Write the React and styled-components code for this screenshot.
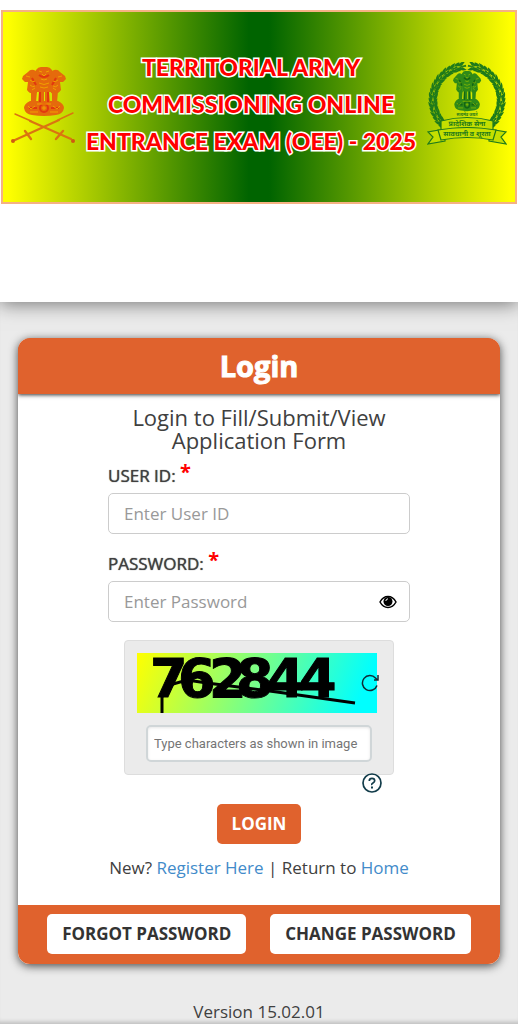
import { useState } from 'react';
import styled, { createGlobalStyle } from 'styled-components';

const GlobalStyle = createGlobalStyle`
  * {
    box-sizing: border-box;
  }
  body {
    margin: 0;
    background: #ebebeb;
    color: #404040;
    font-family: 'Open Sans', 'Liberation Sans', sans-serif;
    font-size: 17px;
    line-height: 24px;
  }
`;

const Header = styled.header`
  padding: 10px 0 98px;
  background: #fff;
  box-shadow: 0 2px 18px rgba(0, 0, 0, 0.5);
`;

const Banner = styled.div`
  display: grid;
  grid-template-columns: 64px 1fr 80px;
  align-items: center;
  margin: 0 1px;
  height: 194px;
  padding: 0 8px 6px;
  border: 2px solid #f5b183;
  background: linear-gradient(90deg, #ff0 1%, #006400 48%, #006400 52%, #ff0 99%);
`;

const BannerTitle = styled.h1`
  margin: 0;
  color: #f00;
  font-family: Lato, 'Liberation Sans', sans-serif;
  font-size: 23px;
  font-weight: 900;
  line-height: 37px;
  text-align: center;
  white-space: nowrap;
  -webkit-text-stroke: 3px #fff;
  paint-order: stroke fill;
`;

const Page = styled.main`
  padding: 36px 18px 0;
  box-shadow: inset 0 -5px 4px -3px rgba(0, 0, 0, 0.2);
`;

const CardShadow = styled.div`
  border-radius: 12px;
  box-shadow: 0 2px 10px rgba(0, 0, 0, 0.7);
`;

const Card = styled.section`
  overflow: hidden;
  border-radius: 12px;
  background: #fff;
`;

const CardTitle = styled.h2`
  margin: 0;
  padding: 12px 0;
  background: #e0622d;
  box-shadow: 0 1px 4px rgba(0, 0, 0, 0.8);
  color: #fff;
  font-size: 29px;
  font-weight: 700;
  line-height: 32px;
  text-align: center;
  -webkit-text-stroke: 1px #fff;
`;

const Form = styled.form`
  display: flex;
  flex-direction: column;
  align-items: center;
  padding: 12px 90px 25px;
`;

const Lead = styled.p`
  margin: 0 0 12px;
  font-size: 22px;
  line-height: 23px;
  text-align: center;
`;

const Field = styled.div`
  width: 100%;
  margin-bottom: 18px;
`;

const Label = styled.label`
  display: block;
  margin-bottom: 5px;
  text-shadow: 0 0 1px currentColor;
`;

const Required = styled.span`
  color: #f00;
  font-size: 20px;
  font-weight: 700;
  line-height: 0;
  text-shadow: none;
  vertical-align: 3px;
`;

const InputWrap = styled.div`
  display: flex;
  align-items: center;
  height: 41px;
  padding: 0 12px 0 15px;
  border: 1px solid #ccc;
  border-radius: 5px;
  background: #fff;
`;

const Input = styled.input`
  flex: 1;
  min-width: 0;
  padding: 0;
  border: 0;
  outline: 0;
  background: none;
  color: #404040;
  font: inherit;

  &::placeholder {
    color: #999;
  }
`;

const IconButton = styled.button`
  display: flex;
  padding: 0;
  border: 0;
  background: none;
  color: #000;
  cursor: pointer;
`;

const Captcha = styled.div`
  width: 270px;
  padding: 12px;
  border: 1px solid #ddd;
  border-radius: 4px;
  background: #ebebeb;
`;

const CaptchaImage = styled.div`
  display: flex;
  align-items: center;
  width: 242px;
  height: 60px;
`;

const CaptchaPicture = styled.svg`
  display: block;
  flex: none;
  width: 240px;
  height: 60px;
  overflow: visible;
`;

const RefreshButton = styled(IconButton)`
  flex: none;
  margin-left: -16px;
`;

const CaptchaInput = styled.input`
  display: block;
  width: 226px;
  height: 37px;
  margin: 12px 0 0 9px;
  padding: 0 6px;
  border: 2px solid #d0d6d8;
  border-radius: 5px;
  background: #fff;
  box-shadow: inset 0 1px 3px rgba(0, 0, 0, 0.1);
  font-family: Roboto, 'Liberation Sans', sans-serif;
  font-size: 13px;

  &::placeholder {
    color: #757575;
  }
`;

const HelpButton = styled(IconButton)`
  align-self: flex-end;
  margin: -2px 28px 11px 0;
`;

const Button = styled.button`
  height: 40px;
  padding: 0 15px;
  border: 0;
  border-radius: 5px;
  background: ${({ $primary }) => ($primary ? '#e0622d' : '#fff')};
  color: ${({ $primary }) => ($primary ? '#fff' : '#333')};
  font: inherit;
  font-weight: 700;
  white-space: nowrap;
  cursor: pointer;
`;

const Links = styled.p`
  margin: 12px 0 0;
  white-space: nowrap;
`;

const Link = styled.a`
  color: #428bca;
  text-decoration: none;
`;

const CardFooter = styled.footer`
  display: flex;
  justify-content: center;
  gap: 24px;
  padding: 9px 0 10px;
  background: #e0622d;
`;

const Version = styled.footer`
  margin-top: 36px;
  text-align: center;
`;

const Lions = ({ color, shade, light }) => (
  <g fill={color}>
    <path d="M14 3q2-3 5-3h6q3 0 5 3l1 5-2 5v12H15V13l-2-5z" />
    <path d="M14 4Q9 1 6 5L1 9l-1 3 3 3 3 0-1 8q3 5 10 3l1-14zM30 4q5-3 8 1l5 4 1 3-3 3-3 0 1 8q-3 5-10 3l-1-14z" />
    <path d="M9 24h6l-1 12H9zM17 24h5v12h-6zM23 24h4l1 12h-5zM30 24h6l-1 12h-5z" />
    <path d="M8 34h28q6 3 6 7-1 6-8 7-12 2-24 0-7-1-8-7 0-4 6-7z" />
    <g fill="none" stroke={shade} strokeWidth="2">
      <path d="M18 25v10M26 25v10M17 8q5 4 10 0M10 11l4 7M34 11l-4 7M7 41h8M29 41h8" />
      <circle cx="22" cy="41" r="4" />
    </g>
    <g fill="none" stroke={light} strokeWidth="1">
      <path d="M17 4l3 1m4 0l3-1m-7 3l2 2 2-2m-5 5q3 2 6 0m-8 4q5 3 10 0m-9 4q4 2 8 0M4 9l4 1m28 0l4-1M8 13q3 3 5 1m18 0q2 2 5-1M8 18q3 3 5 1m18 0q3 2 5-1M10 23l3-2m18 0l3 2M20 41h4m-2-2v4M6 39l3 3 4-3m18 0l4 3 3-3M8 45h8m12 0h8M15 37h14" />
    </g>
  </g>
);

const ArmyEmblem = () => (
  <svg viewBox="0 0 64 80" width="64" height="80" role="img" aria-label="Army emblem">
    <g transform="translate(11 3)">
      <Lions color="#e56a0c" shade="#e2380f" light="#f0a000" />
    </g>
    <g fill="none" stroke="#db7410" strokeLinecap="round">
      <path d="M4 50L20 57M62 49L47 56" strokeWidth="1.4" />
      <path d="M19 57L60 75M48 56L4 76" strokeWidth="2.2" />
      <path d="M14 67l6 8M52 67l-7 8" strokeWidth="2.4" />
    </g>
    <circle cx="2" cy="77" r="2" fill="#cf5a10" />
    <circle cx="62" cy="77" r="2" fill="#cf5a10" />
  </svg>
);

const leafAngles = [10, 25, 40, 55, 70, 85, 100, 115, 130];

const TerritorialEmblem = () => (
  <svg viewBox="0 0 80 84" width="80" height="84" role="img" aria-label="Territorial Army emblem">
    {[1, -1].map((side) => (
      <g key={side} transform={`translate(40 38) scale(${side} 1)`} fill="#1f7a1a">
        {leafAngles.map((angle) => (
          <g key={angle} transform={`rotate(${angle}) translate(0 -34)`}>
            <path d="M-5-4.500Q1-5 4-1L-1-.500zM-5-1L5 0-5 1zM-5 4.500Q1 5 4 1L-1 .500z" />
            <path d="M1-4.500Q6-4 7-1L2-1zM1 4.500Q6 4 7 1L2 1z" />
          </g>
        ))}
      </g>
    ))}
    <g transform="translate(26 9) scale(.64 .82)">
      <Lions color="#2f8a18" shade="#146414" light="#8dbb00" />
    </g>
    <g fill="#c4df00" stroke="#1f7a1a" strokeWidth="1.2">
      <path d="M12 68L1 70l5 5-5 7 17-3v-9zM68 68l11 2-5 5 5 7-17-3v-9z" />
      <path d="M14 59q26-7 52 0v10q-26-7-52 0z" />
      <path d="M11 68q29-5 58 0l-3 10q-26-5-52 0z" />
    </g>
    <g
      fill="#1f7a1a"
      fontFamily="'Noto Sans Devanagari', 'Noto Sans', sans-serif"
      fontWeight="700"
      textAnchor="middle"
    >
      <text x="40" y="54" fontSize="4">सत्यमेव जयते</text>
      <text x="40" y="64" fontSize="7">प्रादेशिक सेना</text>
      <text x="40" y="74" fontSize="7">सावधानी व शूरता</text>
    </g>
  </svg>
);

const digits = [
  { value: '7', x: 13 },
  { value: '6', x: 41 },
  { value: '2', x: 72 },
  { value: '8', x: 99 },
  { value: '4', x: 130 },
  { value: '4', x: 162 },
];

const CaptchaCode = () => (
  <CaptchaPicture viewBox="0 0 240 60" role="img" aria-label="Captcha">
    <defs>
      <linearGradient id="captcha" x1="0" x2="1" y1="0" y2="0.1">
        <stop offset="0" stopColor="#ff0" />
        <stop offset="0.5" stopColor="#80ff80" />
        <stop offset="1" stopColor="#0ff" />
      </linearGradient>
    </defs>
    <rect width="240" height="60" fill="url(#captcha)" />
    <g
      fontFamily="'DejaVu Sans', sans-serif"
      fontSize="54"
      fontWeight="700"
      stroke="#000"
      strokeWidth="1"
    >
      {digits.map(({ value, x }) => (
        <text key={x} x={x} y="44">
          {value}
        </text>
      ))}
    </g>
    <path d="M25 60V44L36 31 50 27 70 30 140 39 218 50" fill="none" stroke="#000" strokeWidth="3" />
  </CaptchaPicture>
);

const App = () => {
  const [visible, setVisible] = useState(false);

  return (
    <>
      <GlobalStyle />
      <Header>
        <Banner>
          <ArmyEmblem />
          <BannerTitle>
            TERRITORIAL ARMY
            <br />
            COMMISSIONING ONLINE
            <br />
            ENTRANCE EXAM (OEE) - 2025
          </BannerTitle>
          <TerritorialEmblem />
        </Banner>
      </Header>
      <Page>
        <CardShadow>
          <Card>
            <CardTitle>Login</CardTitle>
            <Form onSubmit={(e) => e.preventDefault()}>
              <Lead>Login to Fill/Submit/View Application Form</Lead>
              <Field>
                <Label htmlFor="user">
                  USER ID: <Required>*</Required>
                </Label>
                <InputWrap>
                  <Input id="user" placeholder="Enter User ID" />
                </InputWrap>
              </Field>
              <Field>
                <Label htmlFor="password">
                  PASSWORD: <Required>*</Required>
                </Label>
                <InputWrap>
                  <Input
                    id="password"
                    type={visible ? 'text' : 'password'}
                    placeholder="Enter Password"
                  />
                  <IconButton
                    type="button"
                    aria-label="Show password"
                    onClick={() => setVisible(!visible)}
                  >
                    <svg width="18" height="14" viewBox="0 0 18 14">
                      <path
                        d="M1 7Q4 1.5 9 1.5T17 7Q14 12.5 9 12.5T1 7z"
                        fill="#fff"
                        stroke="#000"
                        strokeWidth="1.5"
                      />
                      <circle cx="9" cy="6.5" r="4.5" />
                      <path d="M6.8 6Q7 4 9 3.8" fill="none" stroke="#fff" />
                    </svg>
                  </IconButton>
                </InputWrap>
              </Field>
              <Captcha>
                <CaptchaImage>
                  <CaptchaCode />
                  <RefreshButton type="button" aria-label="Refresh captcha">
                    <svg width="18" height="18" viewBox="0 0 18 18" fill="none" stroke="#102b35">
                      <path d="M16 11.5A7.5 7.5 0 1 1 14.5 4L16.5 6M17 1v5h-4" strokeWidth="1.5" />
                    </svg>
                  </RefreshButton>
                </CaptchaImage>
                <CaptchaInput
                  aria-label="Captcha characters"
                  placeholder="Type characters as shown in image"
                />
              </Captcha>
              <HelpButton type="button" aria-label="Help">
                <svg width="20" height="20" viewBox="0 0 20 20" fill="none" stroke="#123c4a">
                  <circle cx="10" cy="10" r="9" strokeWidth="1.7" />
                  <path d="M7.3 8Q7.3 5.3 10 5.3T12.7 7.8Q12.7 9 11 10T10 12" strokeWidth="1.7" />
                  <path d="M10 13.5v2" strokeWidth="2" />
                </svg>
              </HelpButton>
              <Button $primary>LOGIN</Button>
              <Links>
                New? <Link href="#register">Register Here</Link> | Return to{' '}
                <Link href="#home">Home</Link>
              </Links>
            </Form>
            <CardFooter>
              <Button type="button">FORGOT PASSWORD</Button>
              <Button type="button">CHANGE PASSWORD</Button>
            </CardFooter>
          </Card>
        </CardShadow>
        <Version>Version 15.02.01</Version>
      </Page>
    </>
  );
};

export default App;
